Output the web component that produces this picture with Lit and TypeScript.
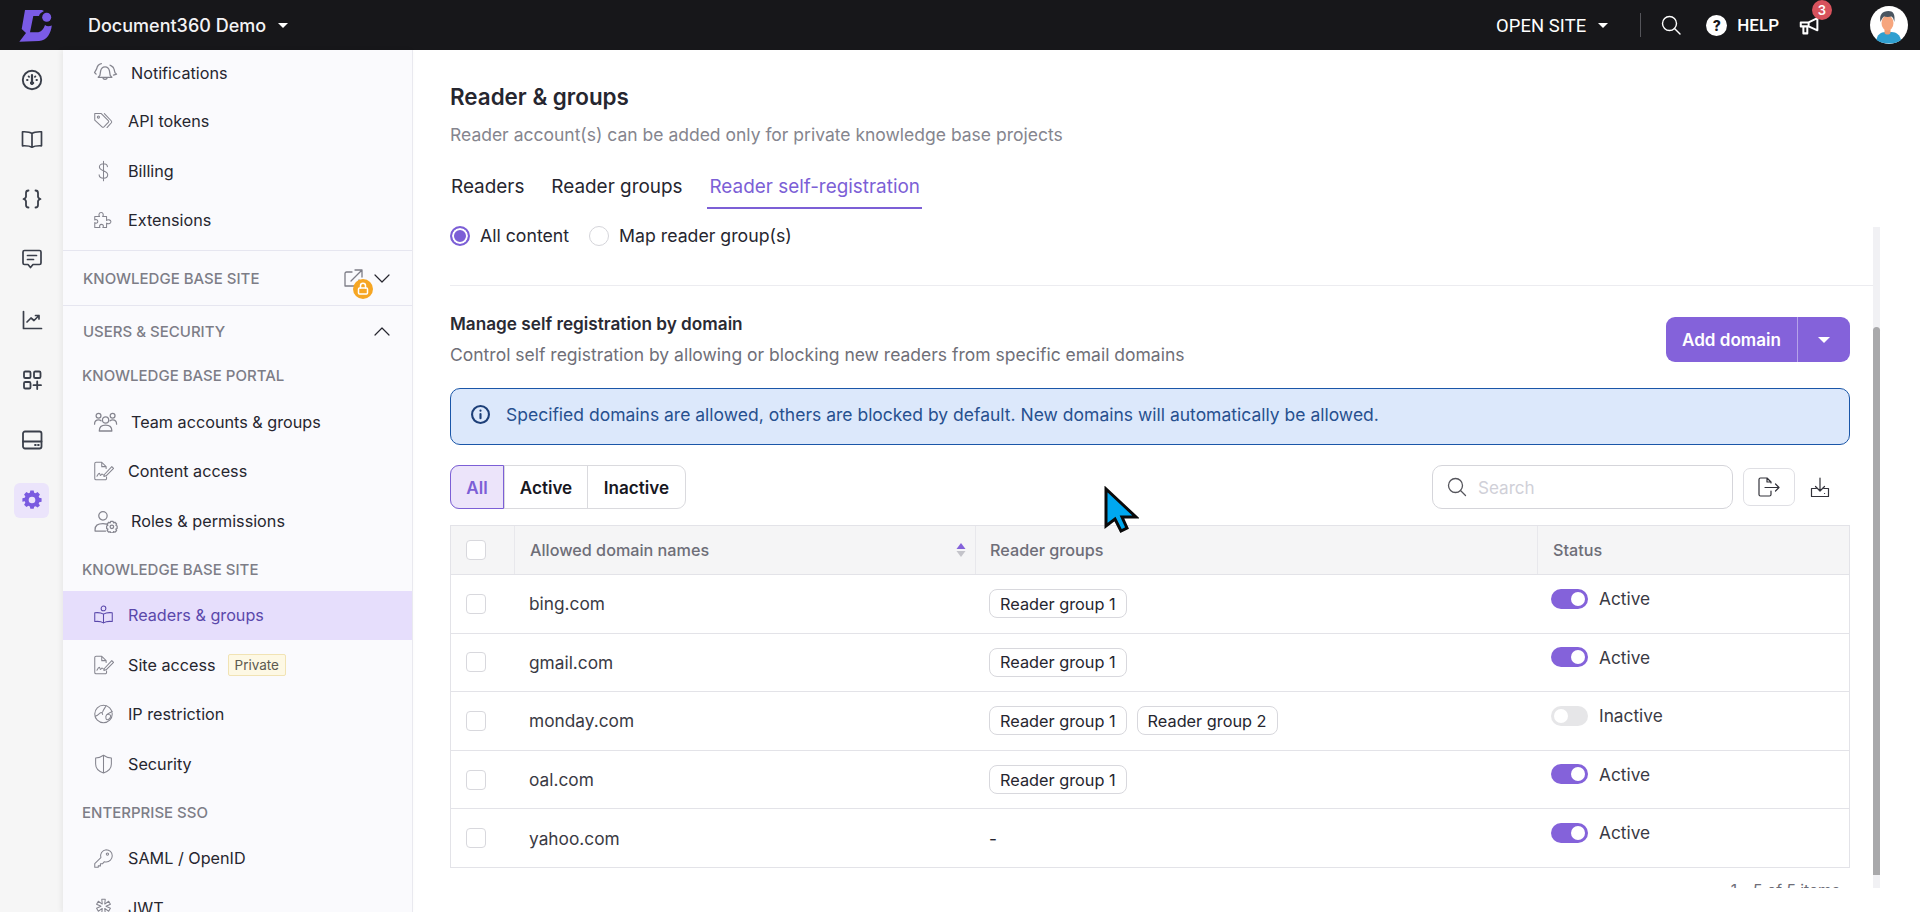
import { LitElement, html, css, svg } from 'lit';
import { customElement } from 'lit/decorators.js';

const railIcons = [
  svg`<circle cx="12" cy="12" r="9.2" stroke-width="1.9"/><path d="M12 7v7" stroke-width="2.2"/><circle cx="12" cy="15" r="1.6" fill="currentColor"/><path d="M7 12h.6M16.4 12h.6M8.6 8.4l.5.5M15.4 8.4l-.5.5" stroke-width="1.8"/>`,
  svg`<path d="M12 6.5C10 5 7 4.6 2.5 4.8v14c4.5-.2 7.5.2 9.5 1.4 2-1.2 5-1.6 9.5-1.4v-14C17 4.6 14 5 12 6.5zM12 6.5v13.7" stroke-width="1.7"/>`,
  svg`<path d="M8.5 3.5C6.5 3.5 6 4.5 6 6v3.5c0 1.3-.8 2-2.5 2.5C5.2 12.5 6 13.2 6 14.5V18c0 1.5.5 2.5 2.5 2.5M15.5 3.5c2 0 2.5 1 2.5 2.5v3.5c0 1.3.8 2 2.5 2.5-1.7.5-2.5 1.2-2.5 2.5V18c0 1.5-.5 2.5-2.5 2.5" stroke-width="1.8"/>`,
  svg`<path d="M4.5 3.5h15A1.5 1.5 0 0 1 21 5v11a1.5 1.5 0 0 1-1.5 1.5H13l-2.5 3-2.5-3H4.5A1.5 1.5 0 0 1 3 16V5a1.5 1.5 0 0 1 1.5-1.5zM7.5 8.5h9M7.5 12.5h6" stroke-width="1.7"/>`,
  svg`<path d="M3.5 3.5v17h18M7 14l4-4 3 2.5 5-5M15.5 7.5H19V11" stroke-width="1.7"/>`,
  svg`<rect x="4" y="3.5" width="6.5" height="6.5" rx="1.3" stroke-width="1.8"/><rect x="14" y="3.5" width="6.5" height="6.5" rx="1.3" stroke-width="1.8"/><rect x="4" y="14" width="6.5" height="6.5" rx="1.3" stroke-width="1.8"/><path d="M17.2 13.5V21M13.5 17.2H21" stroke-width="1.8"/>`,
  svg`<rect x="3" y="3.5" width="18.5" height="17" rx="2" stroke-width="1.8"/><path d="M3 13.5h18.5" stroke-width="1.8"/><path d="M15 17h.8M18 17h.8" stroke-width="1.8"/>`,
];

const gearIcon = svg`<path fill="currentColor" stroke="none" fill-rule="evenodd" d="M10 2h4l.6 2.8 1.7.7 2.4-1.5 2.8 2.8-1.5 2.4.7 1.7L23.500 11.500v4l-2.800.6-.7 1.700 1.500 2.400-2.800 2.300-2.400-1.500-1.700.7-.6 2.300h-4l-.6-2.800-1.700-.7-2.400 1.500-2.800-2.800 1.500-2.400-.7-1.700L.5 15.500v-4l2.800-.6.7-1.700L2.500 6.800l2.800-2.800 2.400 1.500 1.700-.7zM12 9.500a4 4 0 1 0 0 8 4 4 0 0 0 0-8z" transform="translate(0 -1.500)"/>`;

const navIcons: Record<string, unknown> = {
  bell: svg`<g transform="scale(1.05)"><path d="M11 5.500c2.500 0 3.800 1.800 4.200 4l.7 4.200 1.600 1.800H4.500l1.600-1.800.7-4.200c.4-2.200 1.700-4 4.200-4zM9 15.500c0 1.300.9 2 2 2s2-.7 2-2"/><path d="M7.500 2.500C5 3 3.500 5 3 7.500l-2 3.500 1.500 1.500M15.800 4c1.500 1 3.200 1.200 3.700 3.500l1 3.800 1.500 1.200-3 1"/></g>`,
  tag: svg`<path d="M2 3.500h7.500l8 8a1.600 1.600 0 0 1 0 2.200l-5 5a1.600 1.600 0 0 1-2.200 0L2 11zM13 3.500l8 8.500a1.600 1.600 0 0 1 0 2l-5 5.500"/><circle cx="6.200" cy="7.500" r="1.200"/>`,
  dollar: svg`<path d="M16.500 7c-.3-1.900-2-3.200-4.500-3.200S7.300 5.200 7.300 7.500c0 5 9.500 3.300 9.500 8.800 0 2.300-2.100 3.900-4.800 3.900s-4.800-1.600-5-3.800M12 1v22"/>`,
  puzzle: svg`<path d="M2 8h5.500c-1.200-1-1-4.500 1.800-4.500S12.200 7 11 8h4.500v4.500c1-1.200 5-1 5 1.500s-4 2.700-5 1.500V20.500h-4.200c1-1.200.8-3.500-1.500-3.500S7 19.300 8 20.500H2V15c1.200 1 3.500.9 3.500-1.300S3.200 11 2 12z"/>`,
  team: svg`<g transform="scale(1.05)"><circle cx="11.500" cy="9.500" r="3"/><path d="M5.500 20c0-3.500 2.500-5.500 6-5.500s6 2 6 5.500z"/><circle cx="4.800" cy="5.500" r="2.300"/><circle cx="18.200" cy="5.500" r="2.300"/><path d="M1 13.500c0-2.500 1.500-4 3.800-4 1 0 1.800.3 2.400.8M22 13.500c0-2.500-1.500-4-3.800-4-1 0-1.800.3-2.400.8"/></g>`,
  sign: svg`<path d="M15 9V7l-5-5H3.500A1.500 1.500 0 0 0 2 3.500v17A1.500 1.500 0 0 0 3.500 22H14a1.500 1.500 0 0 0 1.500-1.500V19M10 2v5h5M4.500 18c1-2 2-3.500 2.800-3.500s.4 2.500 1.200 2.500 1-1.500 1.800-1.500.8 1.200 2 1.200M13 16l8.500-9 2 2-8.500 8.500-2.500.8z"/>`,
  roles: svg`<g transform="scale(1.05)"><circle cx="9" cy="6.500" r="4"/><path d="M1.500 21v-1.500c0-3.500 3-5.500 7.500-5.500 1.300 0 2.500.2 3.500.5M1.500 21h10"/><circle cx="17.500" cy="17" r="1.700"/><path d="M16.300 11.800h2.400l.4 1.400 1.300-.6 1.600 1.700-.7 1.200 1.200.7v2.400l-1.200.6.7 1.300-1.600 1.600-1.300-.6-.4 1.300h-2.400l-.4-1.300-1.300.6-1.600-1.600.7-1.300-1.200-.6v-2.400l1.200-.7-.7-1.200 1.600-1.700 1.300.6z"/></g>`,
  readers: svg`<circle cx="12" cy="4.500" r="2.700"/><path d="M12 11C9.500 9.500 6 9 2 9.500v10c4-.5 7.500 0 10 1.500 2.500-1.500 6-2 10-1.500v-10c-4-.5-7.500 0-10 1.500zM12 11v10"/>`,
  globe: svg`<circle cx="12" cy="12" r="10"/><path d="M2.500 14.500c2.500-.5 4-2 5.500-3.500s2.500-.5 3 1.500M15 2.500c-1 2-2 3-3 5s-1 3-2 3M22 9c-2 1.500-5 2-6.500 4s-1 3-.5 4.500 2 1.500 3.500 0 2.500-3.500 1-4.500-3 0-3.500-.5"/>`,
  shield: svg`<path d="M12 2c2.800 2 6 3 9 3.200V12c0 5-3.500 8.500-9 10.200C6.500 20.500 3 17 3 12V5.200C6 5 9.200 4 12 2zM12 2v20.200"/>`,
  key: svg`<path d="M15 2.500a7 7 0 0 1 0 14c-.7 0-1.400-.1-2-.3L11 18.500H8.500V21H6v1.500H2v-4l7-6.800a7 7 0 0 1 6-9.200z"/><circle cx="16.500" cy="7.500" r="1.300"/>`,
  jwt: svg`<path d="M10 2h4l-.6 5.500 4.500-3.200 2 3.400-5 2.300 5 2.300-2 3.400-4.500-3.200L14 18h-4l.6-5.500-4.500 3.200-2-3.400 5-2.300-5-2.300 2-3.400 4.500 3.200z"/>`,
};

type NavItem = { label: string; icon: string; wide?: boolean; badge?: string; active?: boolean };

const topItems: NavItem[] = [
  { label: 'Notifications', icon: 'bell', wide: true },
  { label: 'API tokens', icon: 'tag' },
  { label: 'Billing', icon: 'dollar' },
  { label: 'Extensions', icon: 'puzzle' },
];
const portalItems: NavItem[] = [
  { label: 'Team accounts & groups', icon: 'team', wide: true },
  { label: 'Content access', icon: 'sign' },
  { label: 'Roles & permissions', icon: 'roles', wide: true },
];
const siteItems: NavItem[] = [
  { label: 'Readers & groups', icon: 'readers', active: true },
  { label: 'Site access', icon: 'sign', badge: 'Private' },
  { label: 'IP restriction', icon: 'globe' },
  { label: 'Security', icon: 'shield' },
];
const ssoItems: NavItem[] = [
  { label: 'SAML / OpenID', icon: 'key' },
  { label: 'JWT', icon: 'jwt' },
];

type DomainRow = { name: string; groups: string[]; active: boolean };

const rows: DomainRow[] = [
  { name: 'bing.com', groups: ['Reader group 1'], active: true },
  { name: 'gmail.com', groups: ['Reader group 1'], active: true },
  { name: 'monday.com', groups: ['Reader group 1', 'Reader group 2'], active: false },
  { name: 'oal.com', groups: ['Reader group 1'], active: true },
  { name: 'yahoo.com', groups: [], active: true },
];

@customElement('app-root')
export class AppRoot extends LitElement {
  static styles = css`
    :host {
      display: flex;
      flex-direction: column;
      position: relative;
      height: 912px;
      overflow: hidden;
      background: #fff;
      font-family: Inter, 'Liberation Sans', sans-serif;
      color: #26262f;
    }
    svg {
      display: block;
      fill: none;
      stroke: currentColor;
      stroke-linecap: round;
      stroke-linejoin: round;
    }

    /* top bar */
    .topbar {
      flex: 0 0 50px;
      display: flex;
      align-items: center;
      background: #17171a;
      color: #fff;
    }
    .logo { margin-left: 18px; stroke: none; }
    .brand {
      margin-left: 34px;
      font-size: 18px;
      font-weight: 500;
      color: #f3f3f5;
    }
    .caret {
      width: 0;
      height: 0;
      border-left: 5px solid transparent;
      border-right: 5px solid transparent;
      border-top: 5px solid #fff;
    }
    .brand + .caret { margin-left: 12px; }
    .top-right {
      margin-left: auto;
      display: flex;
      align-items: center;
    }
    .open-site { font-size: 18.4px; font-family: Roboto, Inter, sans-serif; letter-spacing: .1px; }
    .open-site + .caret { margin-left: 12px; }
    .sep { width: 1px; height: 24px; background: #55555a; margin-left: 32px; }
    .search { margin-left: 20px; }
    .help-dot {
      margin-left: 25px;
      width: 21px;
      height: 21px;
      border-radius: 50%;
      background: #fff;
      color: #17171a;
      font-size: 14px;
      font-weight: 800;
      text-align: center;
      line-height: 21px;
    }
    .help { margin-left: 10px; font-size: 17px; font-weight: 500; font-family: Roboto, Inter, sans-serif; }
    .megaphone { margin-left: 20px; position: relative; }
    .count {
      position: absolute;
      left: 13px;
      top: -15px;
      width: 20px;
      height: 20px;
      border-radius: 50%;
      background: #d8525c;
      color: #fff;
      font-size: 13px;
      font-weight: 600;
      line-height: 20px;
      text-align: center;
    }
    .avatar { margin: 0 12px 0 50px; stroke: none; }

    /* body */
    .body { flex: 1; display: flex; min-height: 0; }
    .rail {
      flex: 0 0 63px;
      background: #f6f6f6;
      display: flex;
      flex-direction: column;
      align-items: center;
      color: #3a3f4a;
    }
    .rail-item {
      flex: 0 0 60.2px;
      display: flex;
      align-items: center;
      justify-content: center;
    }
    .rail-item:first-child { flex-basis: 59px; }
    .rail-active {
      width: 35px;
      height: 35px;
      display: flex;
      align-items: center;
      justify-content: center;
      border-radius: 6px;
      background: #ebe4fb;
      color: #7a5be0;
    }

    /* sidebar */
    .sidebar {
      flex: 0 0 349px;
      overflow: hidden;
      background: #fafafd;
      border-right: 1px solid #e9e9ef;
      box-shadow: -2px 0 5px rgba(0, 0, 0, .06);
    }
    .item {
      height: 49.5px;
      display: flex;
      align-items: center;
      padding-left: 30px;
      font-size: 16.2px;
      color: #26262f;
    }
    .item:first-child { height: 46.5px; }
    .item svg { color: #85858f; flex: none; stroke-width: 1.2; }
    .item .text { margin-left: 14px; }
    .item.wide .text { margin-left: 13px; }
    .item.active { background: #e6defc; color: #5a48ab; }
    .item.active svg { color: #5a48ab; }
    .private {
      margin-left: 12px;
      padding: 0 6px;
      height: 20px;
      border: 1px solid #f1e3b4;
      border-radius: 2px;
      background: #fdf8e4;
      color: #5c5a50;
      font-size: 13.5px;
      line-height: 20px;
    }
    .group-head {
      display: flex;
      align-items: center;
      padding: 0 22px 0 20px;
      border-top: 1px solid #e6e6f0;
      font-size: 15px;
      font-weight: 500;
      color: #7d7d87;
    }
    .group-head.site { height: 54px; margin-top: 5px; }
    .group-head.users { height: 50px; }
    .group-head .chev { margin-left: auto; color: #26262f; stroke-width: 1.2; }
    .lock-wrap { position: relative; margin-left: auto; }
    .lock {
      position: absolute;
      left: 9px;
      top: 10px;
      width: 20px;
      height: 20px;
      border-radius: 50%;
      background: #f6a623;
      color: #fff;
      display: flex;
      align-items: center;
      justify-content: center;
    }
    .group-head .lock-wrap + .chev { margin-left: 11px; }
    .sub-label {
      display: flex;
      align-items: center;
      padding-left: 19px;
      font-size: 15px;
      font-weight: 500;
      color: #7d7d87;
    }
    .sub-label.portal { height: 39px; padding-bottom: 2px; }
    .sub-label.next { height: 43px; padding-top: 2px; }

    /* main */
    .main { flex: 1; min-width: 0; display: flex; flex-direction: column; padding-left: 37px; }
    h1 { margin: 32px 0 0; font-size: 22.4px; line-height: 30px; font-weight: 600; color: #26262f; }
    .page-sub { margin: 11px 0 0; font-size: 17.5px; line-height: 24px; color: #85858e; }
    .tabs { display: flex; gap: 23px; margin: 18px 0 0 -1px; }
    .tab {
      padding: 10px 2px 8px;
      font-size: 18.9px;
      line-height: 24px;
      border-bottom: 2px solid transparent;
      color: #26262f;
    }
    .tab.on { color: #7c5fd6; border-bottom-color: #7c5fd6; }
    .scroll-area { flex: 0 0 679px; display: flex; overflow: hidden; }
    .content { flex: 1; min-width: 0; padding: 15px 23px 0 0; }
    .track {
      flex: 0 0 7px;
      margin: 18px 40px 0 0;
      background: #f1f1f4;
      display: flex;
    }
    .thumb {
      flex: 1;
      margin: 100px 0 13px;
      background: #a9a9ab;
      border-radius: 4px 4px 0 0;
    }
    .radios { display: flex; align-items: center; font-size: 17.7px; line-height: 24px; margin-bottom: 37px; }
    .radio {
      width: 20px;
      height: 20px;
      box-sizing: border-box;
      border-radius: 50%;
      border: 1.5px solid #d5d5da;
      margin-right: 10px;
    }
    .radio.on { border: 2px solid #7c5fd6; background: #7c5fd6; box-shadow: inset 0 0 0 2px #fff; }
    .radios .text { margin-right: 20px; }
    .divider { height: 1px; background: #ececf0; margin-right: -23px; }
    .manage-row { display: flex; justify-content: space-between; margin-top: 26px; }
    .manage-title { font-size: 17.2px; line-height: 24px; font-weight: 600; color: #2a2a33; }
    .manage-sub { margin-top: 7px; font-size: 17.5px; line-height: 24px; color: #6f6f78; }
    .split {
      margin-top: 5px;
      height: 45px;
      width: 184px;
      display: flex;
      border-radius: 9px;
      background: #8462da;
      color: #fff;
      font-size: 17.1px;
      font-weight: 600;
    }
    .split-main {
      flex: 0 0 132px;
      box-sizing: border-box;
      display: flex;
      align-items: center;
      justify-content: center;
      border-right: 1px solid #b6a2ea;
    }
    .split-arrow { flex: 1; display: flex; align-items: center; justify-content: center; }
    .split-arrow .caret { border-left-width: 6px; border-right-width: 6px; border-top-width: 6px; }
    .alert {
      margin-top: 21px;
      height: 57px;
      box-sizing: border-box;
      display: flex;
      align-items: center;
      padding: 0 0 5px 20px;
      border: 1px solid #1a56a8;
      border-radius: 10px;
      background: #dce8fb;
      color: #27508f;
      font-size: 17.5px;
    }
    .alert svg { stroke-width: 2; color: #1d3f78; margin-right: 16px; flex: none; }
    .toolbar { display: flex; align-items: center; margin-top: 20px; height: 44px; }
    .segments { display: flex; height: 44px; box-sizing: border-box; border: 1px solid #dadade; border-radius: 9px; font-size: 17.1px; font-weight: 600; }
    .seg { display: flex; align-items: center; justify-content: center; border-left: 1px solid #dadade; color: #17171f; }
    .seg:first-child { border-left: 0; }
    .seg.on {
      margin: -1px 0 -1px -1px;
      border: 1px solid #7c5fd6;
      border-radius: 9px 0 0 9px;
      background: #ece4fa;
      color: #7c5fd6;
    }
    .seg.all { width: 52px; }
    .seg.act { width: 82px; }
    .seg.ina { width: 97px; }
    .search-box {
      margin-left: auto;
      width: 301px;
      height: 44px;
      box-sizing: border-box;
      display: flex;
      align-items: center;
      padding-left: 14px;
      border: 1px solid #d5d5da;
      border-radius: 10px;
      font-size: 17.1px;
      color: #d0d0d8;
    }
    .search-box svg { color: #55555c; stroke-width: 1.3; margin-right: 11px; }
    .icon-btn {
      margin-left: 10px;
      width: 52px;
      height: 38px;
      box-sizing: border-box;
      border: 1px solid #dfdfe4;
      border-radius: 7px;
      display: flex;
      align-items: center;
      justify-content: center;
      color: #32323a;
    }
    .icon-btn svg, .download { stroke-width: 1.2; }
    .download { margin: 0 20px 0 15px; color: #32323a; }

    .table { margin-top: 16px; border: solid #e3e3e8; border-width: 1px 1px 0; }
    .tr {
      display: grid;
      grid-template-columns: 63px 461px 562px 1fr;
      height: 58.6px;
      box-sizing: border-box;
      border-bottom: 1px solid #e3e3e8;
      font-size: 17.3px;
    }
    .tr.head { height: 49px; background: #f5f5f6; font-size: 16.2px; color: #6e6e78; font-weight: 500; }
    .td { display: flex; align-items: center; min-width: 0; }
    .head .td + .td { border-left: 1px solid #e8e8ec; padding-left: 15px; }
    .head .td:nth-child(3) { padding-left: 14px; }
    .check-cell { padding-left: 15px; }
    .check {
      width: 20px;
      height: 20px;
      box-sizing: border-box;
      border: 1px solid #d8d8dd;
      border-radius: 4px;
      background: #fff;
    }
    .name { padding-left: 15px; color: #3a3a44; }
    .sort { margin-left: auto; margin-right: 9px; stroke: none; }
    .groups { padding-left: 14px; gap: 10px; }
    .chip {
      height: 29px;
      box-sizing: border-box;
      display: flex;
      align-items: center;
      padding: 0 10px;
      border: 1px solid #d8d8dd;
      border-radius: 8px;
      font-size: 16.3px;
      color: #26262f;
      background: #fff;
    }
    .status { padding-left: 14px; align-items: flex-start; padding-top: 13.5px; color: #3a3a44; }
    .status-inner { display: flex; align-items: center; height: 20px; }
    .toggle {
      width: 37px;
      height: 20px;
      box-sizing: border-box;
      border-radius: 10px;
      padding: 3px;
      background: #8462da;
      display: flex;
      justify-content: flex-end;
      margin-right: 11px;
    }
    .toggle::after { content: ''; width: 14px; height: 14px; border-radius: 50%; background: #fff; }
    .toggle.off { background: #e6e6e8; justify-content: flex-start; }
    .pager { margin-top: 12px; padding-right: 10px; text-align: right; font-size: 15.6px; line-height: 22px; color: #6e6e78; }
    .cursor { position: absolute; left: 1103px; top: 486px; stroke: none; }
  `;

  private navItem(item: NavItem) {
    return html`
      <div class="item ${item.wide ? 'wide' : ''} ${item.active ? 'active' : ''}">
        <svg width="${item.wide ? 25 : 21}" height="${item.wide ? 24 : 22}" viewBox="0 0 24 24">${navIcons[item.icon]}</svg>
        <span class="text">${item.label}</span>
        ${item.badge ? html`<span class="private">${item.badge}</span>` : ''}
      </div>
    `;
  }

  render() {
    return html`
      <header class="topbar">
        <svg class="logo" width="36" height="36" viewBox="0 0 36 36">
          <path fill="#7a5be6" d="M7 3H22C24 3 25.500 3.500 26 4 23 5.500 21.500 7 21 9H15.300L12 25.300H19C23 25.300 25.500 22.500 27 18 29 19.500 31 19.500 33.800 18.500 33 26 29 33.700 21 34L1.300 34.700 8 26 3.700 22Z"/>
          <circle fill="#7a5be6" cx="28.700" cy="10.300" r="4.500"/>
        </svg>
        <span class="brand">Document360 Demo</span>
        <span class="caret"></span>
        <div class="top-right">
          <span class="open-site">OPEN SITE</span>
          <span class="caret"></span>
          <span class="sep"></span>
          <svg class="search" width="20" height="20" viewBox="0 0 20 20" stroke-width="1.4"><circle cx="8.500" cy="8.500" r="7"/><path d="M13.500 13.500l5.500 5.500"/></svg>
          <span class="help-dot">?</span>
          <span class="help">HELP</span>
          <div class="megaphone">
            <svg width="21" height="21" viewBox="0 0 24 24" stroke-width="2.3"><path d="M2 8.500h9L21 3.500v14l-10-4.500H2zM5 13v8h4.500v-8M11 8.500V13"/></svg>
            <span class="count">3</span>
          </div>
          <svg class="avatar" width="38" height="38" viewBox="0 0 38 38">
            <circle cx="19" cy="19" r="19" fill="#fff"/>
            <path fill="#2f9fd0" d="M6.500 34c.5-5 4-8 9-8h6c5 0 8.500 3 9.500 8-3 2.500-7 3.500-11.500 3.500S9.500 36.500 6.500 34z"/>
            <path fill="#ee9a70" d="M14.500 20h6v7c-1 2-5 2-6 0z"/>
            <ellipse cx="17.500" cy="17" rx="6" ry="7.500" fill="#f6a67e"/>
            <path fill="#4a5560" d="M10.500 16c-1.500-7.500 2-11 8-11 4.500 0 7 3 5.800 11-.6-3-1.500-5-2.800-5.500-3 .7-5.500.5-7.500 0-1.500 1-2.500 3-3.500 5.500z"/>
          </svg>
        </div>
      </header>

      <div class="body">
        <nav class="rail">
          ${railIcons.map(
            (icon) => html`<div class="rail-item"><svg width="24" height="24" viewBox="0 0 24 24">${icon}</svg></div>`
          )}
          <div class="rail-item">
            <div class="rail-active"><svg width="20" height="20" viewBox="0 0 24 24">${gearIcon}</svg></div>
          </div>
        </nav>

        <aside class="sidebar">
          ${topItems.map((i) => this.navItem(i))}
          <div class="group-head site">
            KNOWLEDGE BASE SITE
            <div class="lock-wrap">
              <svg width="19" height="19" viewBox="0 0 19 19" stroke="#7a5be0" stroke-width="1.3"><path d="M8 3H2.500A1.500 1.500 0 0 0 1 4.500v12.500h12.500A1.500 1.500 0 0 0 15 15.500V11M7 12L18 1M11 1h7v7"/></svg>
              <span class="lock">
                <svg width="12" height="13" viewBox="0 0 12 13" stroke-width="1.5"><rect x="1.500" y="6" width="9" height="6" rx="1"/><path d="M3.500 6V3.800a2.500 2.500 0 0 1 5 0V6"/></svg>
              </span>
            </div>
            <svg class="chev" width="16" height="9" viewBox="0 0 16 9"><path d="M1 1l7 7 7-7"/></svg>
          </div>
          <div class="group-head users">
            USERS &amp; SECURITY
            <svg class="chev" width="16" height="9" viewBox="0 0 16 9"><path d="M1 8l7-7 7 7"/></svg>
          </div>
          <div class="sub-label portal">KNOWLEDGE BASE PORTAL</div>
          ${portalItems.map((i) => this.navItem(i))}
          <div class="sub-label next">KNOWLEDGE BASE SITE</div>
          ${siteItems.map((i) => this.navItem(i))}
          <div class="sub-label next">ENTERPRISE SSO</div>
          ${ssoItems.map((i) => this.navItem(i))}
        </aside>

        <main class="main">
          <h1>Reader &amp; groups</h1>
          <p class="page-sub">Reader account(s) can be added only for private knowledge base projects</p>
          <div class="tabs">
            <span class="tab">Readers</span>
            <span class="tab">Reader groups</span>
            <span class="tab on">Reader self-registration</span>
          </div>
          <div class="scroll-area">
            <div class="content">
              <div class="radios">
                <span class="radio on"></span><span class="text">All content</span>
                <span class="radio"></span><span class="text">Map reader group(s)</span>
              </div>
              <div class="divider"></div>
              <div class="manage-row">
                <div>
                  <div class="manage-title">Manage self registration by domain</div>
                  <div class="manage-sub">Control self registration by allowing or blocking new readers from specific email domains</div>
                </div>
                <div class="split">
                  <div class="split-main">Add domain</div>
                  <div class="split-arrow"><span class="caret"></span></div>
                </div>
              </div>
              <div class="alert">
                <svg width="19" height="19" viewBox="0 0 18 18"><circle cx="9" cy="9" r="8"/><path d="M9 8.500v4M9 5.300v.2"/></svg>
                Specified domains are allowed, others are blocked by default. New domains will automatically be allowed.
              </div>
              <div class="toolbar">
                <div class="segments">
                  <div class="seg on all">All</div>
                  <div class="seg act">Active</div>
                  <div class="seg ina">Inactive</div>
                </div>
                <div class="search-box">
                  <svg width="20" height="20" viewBox="0 0 20 20"><circle cx="8.500" cy="8.500" r="7"/><path d="M13.500 13.500l5 5"/></svg>
                  Search
                </div>
                <div class="icon-btn">
                  <svg width="22" height="20" viewBox="0 0 22 20"><path d="M13 6V5L9 1H2.500A1.500 1.500 0 0 0 1 2.500v15A1.500 1.500 0 0 0 2.500 19h9a1.500 1.500 0 0 0 1.500-1.500V14M9 1v4h4M7 10.500h14M17.500 7l3.500 3.500-3.500 3.500"/></svg>
                </div>
                <svg class="download" width="20" height="21" viewBox="0 0 20 21"><path d="M10 1v13M5.500 9.500L10 14l4.500-4.500M6 11.500H1.500v8h17v-8H14M14.500 16.500h.1"/></svg>
              </div>
              <div class="table">
                <div class="tr head">
                  <div class="td check-cell"><span class="check"></span></div>
                  <div class="td">
                    Allowed domain names
                    <svg class="sort" width="10" height="16" viewBox="0 0 10 16"><path fill="#8462da" d="M5 1l4.500 6h-9z"/><path fill="#c4c4ca" d="M5 15L.5 9h9z"/></svg>
                  </div>
                  <div class="td">Reader groups</div>
                  <div class="td">Status</div>
                </div>
                ${rows.map(
                  (r) => html`
                    <div class="tr">
                      <div class="td check-cell"><span class="check"></span></div>
                      <div class="td name">${r.name}</div>
                      <div class="td groups">
                        ${r.groups.length ? r.groups.map((g) => html`<span class="chip">${g}</span>`) : '-'}
                      </div>
                      <div class="td status">
                        <div class="status-inner">
                          <span class="toggle ${r.active ? '' : 'off'}"></span>
                          ${r.active ? 'Active' : 'Inactive'}
                        </div>
                      </div>
                    </div>
                  `
                )}
              </div>
              <div class="pager">1 - 5 of 5 items</div>
            </div>
            <div class="track"><div class="thumb"></div></div>
          </div>
        </main>
      </div>

      <svg class="cursor" width="36" height="48" viewBox="0 0 36 48">
        <path fill="#00a8f0" stroke="#0a0a0a" stroke-width="3" stroke-linejoin="miter" d="M3 3V40L12 33 18 45 24 42 19 31H33Z"/>
      </svg>
    `;
  }
}
